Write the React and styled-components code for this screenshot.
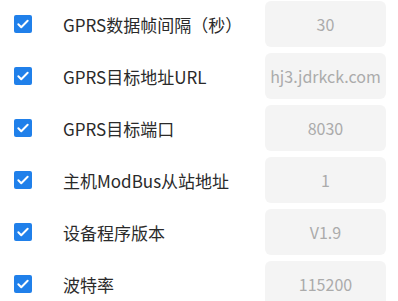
import React from 'react';
import styled, {createGlobalStyle} from 'styled-components';

let GlobalStyle = createGlobalStyle`
    body {
        margin: 0;
        background: #ffffff;
        font-family: "Noto Sans CJK SC", "Noto Sans", sans-serif;
    }
`;

let List = styled.div`
    padding-top: 1px;
    display: flex;
    flex-direction: column;
    gap: 6px;
`;

let Row = styled.div`
    display: flex;
    align-items: center;
    height: 46px;
`;

let Check = styled.span`
    width: 18px;
    height: 18px;
    margin-left: 14px;
    border-radius: 2px;
    background: #2080ea;
    display: flex;
    align-items: center;
    justify-content: center;
    flex-shrink: 0;
`;

let Label = styled.div`
    flex: 1;
    margin-left: 31px;
    font-size: 17px;
    color: #2a2a2a;
    white-space: nowrap;
`;

let Value = styled.div`
    width: 121px;
    height: 46px;
    margin-right: 12px;
    border-radius: 6px;
    background: #f4f4f4;
    color: #ababab;
    font-size: 16px;
    display: flex;
    align-items: center;
    justify-content: center;
    white-space: nowrap;
    overflow: hidden;
`;

let rows = [
    {label: 'GPRS数据帧间隔（秒）', value: '30'},
    {label: 'GPRS目标地址URL', value: 'hj3.jdrkck.com'},
    {label: 'GPRS目标端口', value: '8030'},
    {label: '主机ModBus从站地址', value: '1'},
    {label: '设备程序版本', value: 'V1.9'},
    {label: '波特率', value: '115200'},
];

function Tick() {
    return (
        <svg width="14" height="14" viewBox="0 0 24 24">
            <path d="M4 12.5l5 5L20 6.5" fill="none" stroke="#fff" strokeWidth="3.4"
                  strokeLinecap="round" strokeLinejoin="round"/>
        </svg>
    );
}

export default function App() {
    return (
        <>
            <GlobalStyle/>
            <List>
                {rows.map(r => (
                    <Row key={r.label}>
                        <Check><Tick/></Check>
                        <Label>{r.label}</Label>
                        <Value>{r.value}</Value>
                    </Row>
                ))}
            </List>
        </>
    );
}
